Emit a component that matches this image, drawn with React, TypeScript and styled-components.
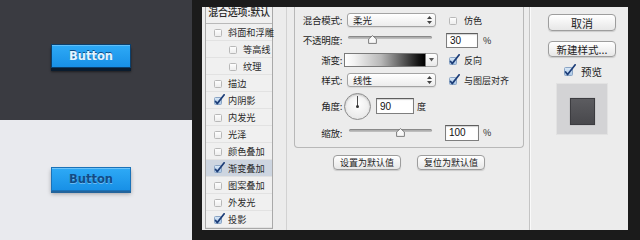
import React from "react";
import styled, { createGlobalStyle } from "styled-components";

const Global = createGlobalStyle`
  html, body { margin: 0; padding: 0; background: #1b1b1b; }
  body { width: 640px; height: 240px; overflow: hidden; font-family: "Noto Sans CJK SC", sans-serif; }
`;

const CJK = `"Noto Sans CJK SC", "Noto Sans", sans-serif`;
const LATIN = `"Liberation Sans", Arial, sans-serif`;

const Page = styled.div`
  display: flex;
  width: 640px;
  height: 240px;
  background: #1b1b1b;
  overflow: hidden;
`;

const Showcase = styled.div`
  width: 192px;
  flex-shrink: 0;
  display: flex;
  flex-direction: column;
`;

const Swatch = styled.div<{ $dark?: boolean }>`
  height: 120px;
  box-sizing: border-box;
  padding: ${(p) => (p.$dark ? "44px 0 0 51px" : "47px 0 0 51px")};
  background: ${(p) => (p.$dark ? "#3a3b41" : "#e9eaee")};
`;

const DemoButton = styled.div<{ $dark?: boolean }>`
  width: 80px;
  height: 24px;
  box-sizing: border-box;
  display: flex;
  align-items: center;
  justify-content: center;
  font: bold 11.5px "DejaVu Sans", Verdana, sans-serif;
  background: linear-gradient(#2eaaf6, #1890e6);
  border: 1px solid ${(p) => (p.$dark ? "#0b3f6b" : "#1a72b8")};
  color: ${(p) => (p.$dark ? "#e2f4ff" : "#114c86")};
  text-shadow: ${(p) => (p.$dark ? "0 -1px 0 #0c4c82" : "0 1px 0 rgba(255,255,255,0.35)")};
  box-shadow: ${(p) =>
    p.$dark
      ? "inset 0 1px 0 rgba(255,255,255,0.25), 0 3px 0 #0a1c2e, 0 4px 2px rgba(0,0,0,0.5)"
      : "inset 0 1px 0 rgba(255,255,255,0.3), 0 2px 0 #23649c, 0 3px 4px rgba(0,0,0,0.3)"};
`;

const Dialog = styled.div`
  margin: 7px 0 0 10px;
  width: 426px;
  height: 223px;
  flex-shrink: 0;
  background: #ececec;
  display: flex;
  overflow: hidden;
`;

const StyleList = styled.div`
  margin: -9px 0 0 3px;
  width: 68px;
  height: 231px;
  flex-shrink: 0;
  box-sizing: border-box;
  border: 1px solid #a9a9a9;
  background: #f0f0f0;
  display: flex;
  flex-direction: column;
`;

const ListHeader = styled.div`
  height: 25px;
  box-sizing: border-box;
  border-bottom: 1px solid #b9b9b9;
  display: flex;
  align-items: center;
  justify-content: center;
  font: 500 10px ${CJK};
  color: #2a2a2a;
  white-space: nowrap;
  padding-top: 1px;
  letter-spacing: -0.2px;
`;

const ListRow = styled.div<{ $indent?: boolean; $active?: boolean }>`
  height: 17px;
  box-sizing: border-box;
  border-bottom: 1px solid #e2e2e2;
  display: flex;
  align-items: center;
  gap: 3px;
  padding-left: ${(p) => (p.$indent ? "23px" : "8px")};
  background: ${(p) => (p.$active ? "#cdd5e0" : "transparent")};
  font: 9.2px ${CJK};
  color: #2a2a2a;
  white-space: nowrap;
`;

const Main = styled.div`
  width: 256px;
  flex-shrink: 0;
  box-sizing: border-box;
  padding-left: 13px;
  display: flex;
`;

const OptionsPane = styled.div`
  flex: 1;
  border-left: 1px solid #d2d2d2;
  padding-left: 7px;
  display: flex;
  flex-direction: column;
`;

const GroupBox = styled.div`
  width: 230px;
  height: 141px;
  box-sizing: border-box;
  border: 1px solid #b8b8b8;
  border-top: none;
  border-radius: 0 0 4px 4px;
  padding-top: 3px;
  display: flex;
  flex-direction: column;
`;

const FieldRow = styled.div<{ $h: number }>`
  height: ${(p) => p.$h}px;
  display: flex;
  align-items: center;
  flex-shrink: 0;
`;

const FieldLabel = styled.div`
  width: 47px;
  flex-shrink: 0;
  text-align: right;
  font: 9.5px ${CJK};
  color: #1e1e1e;
  white-space: nowrap;
  letter-spacing: -0.3px;
`;

const SelectBox = styled.div<{ $ml: number }>`
  margin-left: ${(p) => p.$ml}px;
  width: 89px;
  height: 14px;
  box-sizing: border-box;
  border: 1px solid #a3a3a3;
  border-radius: 3px;
  background: linear-gradient(#ffffff, #ececec);
  box-shadow: 0 1px 1px rgba(0, 0, 0, 0.08);
  display: flex;
  align-items: center;
  justify-content: space-between;
  padding: 0 3px 0 5px;
  font: 9.5px ${CJK};
  color: #1e1e1e;
`;

const CheckItem = styled.div<{ $ml: number; $size?: number }>`
  margin-left: ${(p) => p.$ml}px;
  display: flex;
  align-items: center;
  gap: 4px;
  font: ${(p) => p.$size ?? 9}px ${CJK};
  color: #1e1e1e;
  white-space: nowrap;
`;

const SliderWrap = styled.div<{ $ml: number; $w: number }>`
  position: relative;
  margin-left: ${(p) => p.$ml}px;
  width: ${(p) => p.$w}px;
  height: 10px;
  flex-shrink: 0;
`;

const Track = styled.div`
  position: absolute;
  left: 0;
  right: 0;
  top: 1px;
  height: 3px;
  border-radius: 2px;
  background: linear-gradient(#9a9a9a, #c4c4c4);
  box-shadow: inset 0 1px 0 rgba(0, 0, 0, 0.15);
`;

const Thumb = styled.svg`
  position: absolute;
  top: 0;
`;

const NumInput = styled.div<{ $ml: number; $w: number; $h: number }>`
  margin-left: ${(p) => p.$ml}px;
  width: ${(p) => p.$w}px;
  height: ${(p) => p.$h}px;
  box-sizing: border-box;
  border: 1px solid #7e7e7e;
  border-top-color: #5e5e5e;
  background: #fff;
  box-shadow: inset 0 1px 1px rgba(0, 0, 0, 0.18);
  display: flex;
  align-items: center;
  padding-left: 3px;
  font: 10px ${LATIN};
  color: #111;
  flex-shrink: 0;
`;

const Unit = styled.div<{ $ml: number }>`
  margin-left: ${(p) => p.$ml}px;
  font: 9px ${CJK};
  color: #1e1e1e;
`;

const GradientPicker = styled.div`
  margin-left: 2px;
  width: 94px;
  height: 14px;
  display: flex;
  flex-shrink: 0;
`;

const GradientSwatch = styled.div`
  flex: 1;
  box-sizing: border-box;
  border: 1px solid #7a7a7a;
  background: linear-gradient(to right, #ffffff 0%, #f2f2f2 12%, #b8b8b8 45%, #5a5a5a 72%, #141414 92%, #000 100%);
`;

const GradientArrow = styled.div`
  width: 12px;
  box-sizing: border-box;
  border: 1px solid #a3a3a3;
  border-left: none;
  border-radius: 0 3px 3px 0;
  background: linear-gradient(#ffffff, #e8e8e8);
  display: flex;
  align-items: center;
  justify-content: center;
`;

const Dial = styled.div`
  position: relative;
  margin-left: 2px;
  width: 27px;
  height: 27px;
  box-sizing: border-box;
  border-radius: 50%;
  border: 1px solid #8c8c8c;
  background: radial-gradient(circle at 50% 40%, #ffffff, #e2e2e2);
  box-shadow: inset 0 1px 2px rgba(0, 0, 0, 0.2);
  flex-shrink: 0;
`;

const DialHand = styled.div`
  position: absolute;
  left: 12px;
  top: 2px;
  width: 1px;
  height: 11px;
  background: #4a4a4a;
`;

const DialDot = styled.div`
  position: absolute;
  left: 11px;
  top: 11.5px;
  width: 3px;
  height: 3px;
  border-radius: 50%;
  background: #333;
`;

const ButtonBar = styled.div`
  width: 230px;
  margin-top: 7px;
  display: flex;
  justify-content: center;
  gap: 16px;
`;

const PushButton = styled.div<{ $w: number; $h: number; $size: number }>`
  width: ${(p) => p.$w}px;
  height: ${(p) => p.$h}px;
  box-sizing: border-box;
  border: 1px solid #9d9d9d;
  border-radius: 4px;
  background: linear-gradient(#ffffff, #e7e7e7);
  box-shadow: 0 1px 1px rgba(0, 0, 0, 0.14);
  display: flex;
  align-items: center;
  justify-content: center;
  font: ${(p) => p.$size}px ${CJK};
  color: #1c1c1c;
  white-space: nowrap;
  flex-shrink: 0;
`;

const Divider = styled.div`
  width: 2px;
  flex-shrink: 0;
  box-sizing: border-box;
  border-left: 1px solid #c4c4c4;
  border-right: 1px solid #fafafa;
`;

const SideColumn = styled.div`
  flex: 1;
  display: flex;
  flex-direction: column;
  align-items: center;
  padding: 7px 0 0 5px;
  gap: 10px;
`;

const PreviewRow = styled.div`
  margin-top: -2px;
  height: 12px;
  display: flex;
  align-items: center;
  gap: 5px;
  font: 10.5px ${CJK};
  color: #1c1c1c;
  padding-left: 2px;
`;

const PreviewBox = styled.div`
  margin-top: -4px;
  width: 52px;
  height: 52px;
  box-sizing: border-box;
  border: 1px solid #e2e2e2;
  background: #d3d3d5;
  display: flex;
  justify-content: center;
  padding-top: 14px;
`;

const PreviewSquare = styled.div`
  width: 25px;
  height: 27px;
  box-sizing: border-box;
  border: 1px solid #3c3c40;
  background: linear-gradient(#5c5c60, #48484c);
  box-shadow: 0 0 1px rgba(0, 0, 0, 0.3);
`;

function Box({ checked, size = 8 }: { checked?: boolean; size?: number }) {
  const s = size;
  return (
    <svg width={s + 3} height={s + 3} viewBox={`0 0 ${s + 3} ${s + 3}`} style={{ flexShrink: 0, marginTop: -2 }}>
      <defs>
        <linearGradient id={`cb${s}${checked ? 1 : 0}`} x1="0" y1="0" x2="0" y2="1">
          <stop offset="0" stopColor={checked ? "#d9e8f7" : "#ffffff"} />
          <stop offset="1" stopColor={checked ? "#a9c6e6" : "#ececec"} />
        </linearGradient>
      </defs>
      <rect x="0.5" y="3.5" width={s - 1} height={s - 1} rx="1" fill={`url(#cb${s}${checked ? 1 : 0})`} stroke={checked ? "#8aa4c4" : "#b8b8b8"} />
      {checked && (
        <path
          d={`M1.6 ${3 + s * 0.55} L${s * 0.4} ${s + 1.6} L${s + 2.2} 0.8`}
          fill="none"
          stroke="#1c3d78"
          strokeWidth="1.7"
          strokeLinecap="round"
          strokeLinejoin="round"
        />
      )}
    </svg>
  );
}

function UpDown() {
  return (
    <svg width="5" height="8" viewBox="0 0 5 8">
      <path d="M2.5 0 L5 3 H0 Z M2.5 8 L5 5 H0 Z" fill="#444" />
    </svg>
  );
}

function Slider({ ml, w, thumb }: { ml: number; w: number; thumb: number }) {
  return (
    <SliderWrap $ml={ml} $w={w}>
      <Track />
      <Thumb width="9" height="9" viewBox="0 0 9 9" style={{ left: thumb }}>
        <path d="M4.5 0.6 L8.4 4 V8.4 H0.6 V4 Z" fill="#f8f8f8" stroke="#707070" strokeWidth="0.9" />
      </Thumb>
    </SliderWrap>
  );
}

const listItems: { label: string; indent?: boolean; checked?: boolean; active?: boolean }[] = [
  { label: "斜面和浮雕" },
  { label: "等高线", indent: true },
  { label: "纹理", indent: true },
  { label: "描边" },
  { label: "内阴影", checked: true },
  { label: "内发光" },
  { label: "光泽" },
  { label: "颜色叠加" },
  { label: "渐变叠加", checked: true, active: true },
  { label: "图案叠加" },
  { label: "外发光" },
  { label: "投影", checked: true },
];

export default function App() {
  return (
    <>
      <Global />
      <Page>
        <Showcase>
          <Swatch $dark>
            <DemoButton $dark>Button</DemoButton>
          </Swatch>
          <Swatch>
            <DemoButton>Button</DemoButton>
          </Swatch>
        </Showcase>

        <Dialog>
          <StyleList>
            <ListHeader>混合选项:默认</ListHeader>
            {listItems.map((it) => (
              <ListRow key={it.label} $indent={it.indent} $active={it.active}>
                <Box checked={it.checked} />
                {it.label}
              </ListRow>
            ))}
          </StyleList>

          <Main>
            <OptionsPane>
              <GroupBox>
                <FieldRow $h={20}>
                  <FieldLabel>混合模式:</FieldLabel>
                  <SelectBox $ml={5}>
                    柔光
                    <UpDown />
                  </SelectBox>
                  <CheckItem $ml={13}>
                    <Box />
                    仿色
                  </CheckItem>
                </FieldRow>
                <FieldRow $h={20}>
                  <FieldLabel>不透明度:</FieldLabel>
                  <Slider ml={6} w={84} thumb={20} />
                  <NumInput $ml={14} $w={32} $h={15}>30</NumInput>
                  <Unit $ml={5}>%</Unit>
                </FieldRow>
                <FieldRow $h={20}>
                  <FieldLabel>渐变:</FieldLabel>
                  <GradientPicker>
                    <GradientSwatch />
                    <GradientArrow>
                      <svg width="5" height="4" viewBox="0 0 5 4">
                        <path d="M0 0 H5 L2.5 3.5 Z" fill="#555" />
                      </svg>
                    </GradientArrow>
                  </GradientPicker>
                  <CheckItem $ml={11}>
                    <Box checked />
                    反向
                  </CheckItem>
                </FieldRow>
                <FieldRow $h={20}>
                  <FieldLabel>样式:</FieldLabel>
                  <SelectBox $ml={5}>
                    线性
                    <UpDown />
                  </SelectBox>
                  <CheckItem $ml={13}>
                    <Box checked />
                    与图层对齐
                  </CheckItem>
                </FieldRow>
                <FieldRow $h={32}>
                  <FieldLabel>角度:</FieldLabel>
                  <Dial>
                    <DialHand />
                    <DialDot />
                  </Dial>
                  <NumInput $ml={5} $w={38} $h={16}>90</NumInput>
                  <Unit $ml={3}>度</Unit>
                </FieldRow>
                <FieldRow $h={21}>
                  <FieldLabel>缩放:</FieldLabel>
                  <Slider ml={7} w={83} thumb={47} />
                  <NumInput $ml={13} $w={34} $h={16}>100</NumInput>
                  <Unit $ml={4}>%</Unit>
                </FieldRow>
              </GroupBox>
              <ButtonBar>
                <PushButton $w={68} $h={15} $size={9}>设置为默认值</PushButton>
                <PushButton $w={68} $h={15} $size={9}>复位为默认值</PushButton>
              </ButtonBar>
            </OptionsPane>
          </Main>

          <Divider />

          <SideColumn>
            <PushButton $w={68} $h={17} $size={11}>取消</PushButton>
            <PushButton $w={68} $h={16} $size={10.5}>新建样式...</PushButton>
            <PreviewRow>
              <Box checked size={9} />
              预览
            </PreviewRow>
            <PreviewBox>
              <PreviewSquare />
            </PreviewBox>
          </SideColumn>
        </Dialog>
      </Page>
    </>
  );
}
